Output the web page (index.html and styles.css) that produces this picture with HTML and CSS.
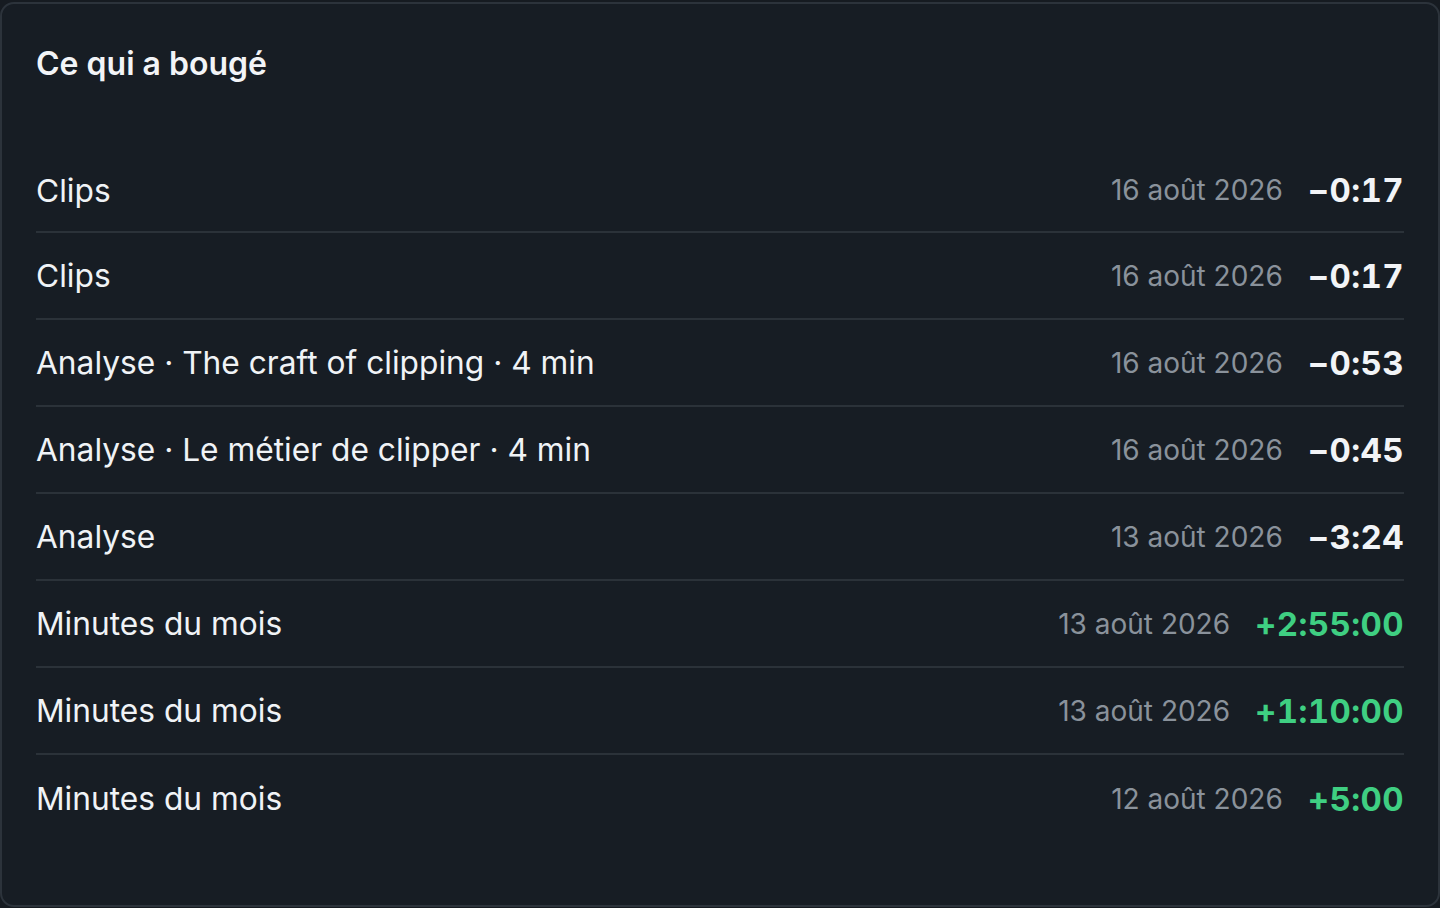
FILE: index.html
```html
<!DOCTYPE html>
<html lang="fr">
<head>
<meta charset="utf-8">
<title>Ce qui a bougé</title>
<link rel="stylesheet" href="styles.css">
</head>
<body>
<section class="card">
  <h2 class="title">Ce qui a bougé</h2>
  <ul class="list">
    <li class="row"><span class="label">Clips</span><span class="meta"><span class="date">16 août 2026</span><span class="amount">−0:17</span></span></li>
    <li class="row"><span class="label">Clips</span><span class="meta"><span class="date">16 août 2026</span><span class="amount">−0:17</span></span></li>
    <li class="row"><span class="label">Analyse · The craft of clipping · 4 min</span><span class="meta"><span class="date">16 août 2026</span><span class="amount">−0:53</span></span></li>
    <li class="row"><span class="label">Analyse · Le métier de clipper · 4 min</span><span class="meta"><span class="date">16 août 2026</span><span class="amount">−0:45</span></span></li>
    <li class="row"><span class="label">Analyse</span><span class="meta"><span class="date">13 août 2026</span><span class="amount">−3:24</span></span></li>
    <li class="row"><span class="label">Minutes du mois</span><span class="meta"><span class="date">13 août 2026</span><span class="amount positive">+2:55:00</span></span></li>
    <li class="row"><span class="label">Minutes du mois</span><span class="meta"><span class="date">13 août 2026</span><span class="amount positive">+1:10:00</span></span></li>
    <li class="row"><span class="label">Minutes du mois</span><span class="meta"><span class="date">12 août 2026</span><span class="amount positive">+5:00</span></span></li>
  </ul>
</section>
</body>
</html>
```

FILE: styles.css
```css
* { box-sizing: border-box; }
html, body {
  margin: 0;
  padding: 0;
  background: #161b21;
  font-family: Inter, "Noto Sans", "Liberation Sans", sans-serif;
  color: #eef1f4;
}
body { padding-top: 2px; }
.card {
  width: 1440px;
  height: 905px;
  background: #171d24;
  border: 2px solid #2c333b;
  border-radius: 14px;
  padding: 39px 34px 0 34px;
}
.title {
  margin: 0;
  font-size: 32px;
  line-height: 42px;
  font-weight: 600;
  color: #f2f4f7;
}
.list {
  list-style: none;
  margin: 64px 0 0 0;
  padding: 0;
}
.row {
  display: flex;
  align-items: center;
  justify-content: space-between;
  height: 87px;
  border-bottom: 2px solid #2b3239;
}
.row:first-child { height: 84px; }
.row:last-child { border-bottom: none; }
.label {
  font-size: 31.7px;
  font-weight: 400;
  color: #f0f3f6;
}
.meta {
  display: flex;
  align-items: center;
  gap: 25px;
}
.date {
  font-size: 28px;
  color: #8a929b;
}
.amount {
  font-size: 33px;
  font-weight: 700;
  letter-spacing: 0.4px;
  color: #f2f4f7;
  font-variant-numeric: tabular-nums;
}
.amount.positive { color: #3fcf82; }
```
